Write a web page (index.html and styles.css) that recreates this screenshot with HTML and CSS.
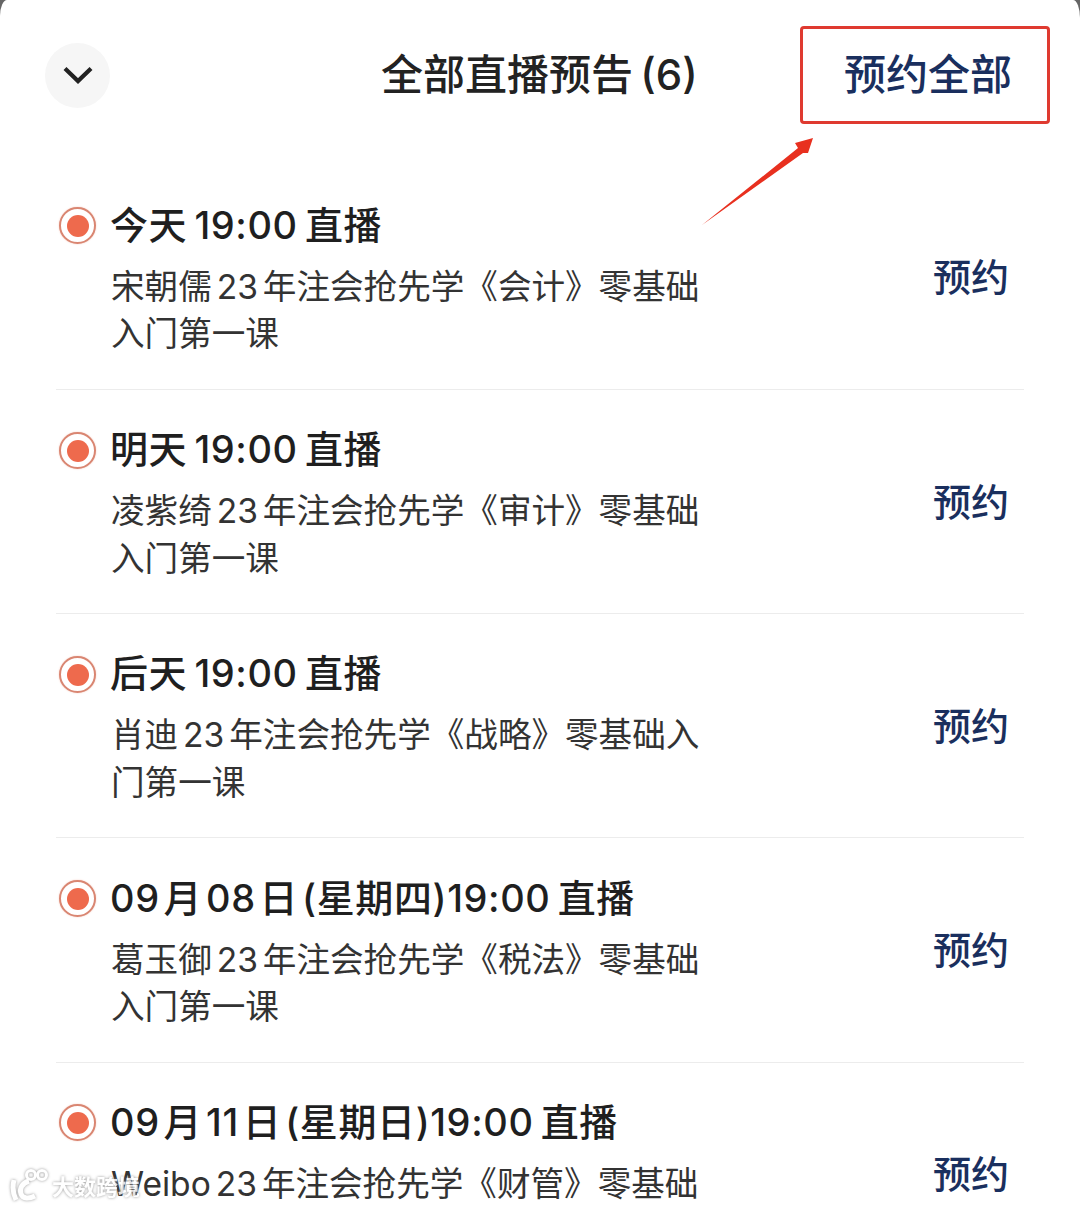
FILE: index.html
```html
<!DOCTYPE html>
<html lang="zh-CN">
<head>
  <meta charset="UTF-8">
  <title>全部直播预告</title>
  <link rel="stylesheet" href="styles.css">
</head>
<body>
  <div class="sheet">
    <div class="top">
      <div class="back">
        <svg width="30" height="20" viewBox="0 0 30 20"><path d="M2 3.5 L15 16 L28 3.5" fill="none" stroke="#222" stroke-width="4.2"/></svg>
      </div>
      <h2 class="top-title">全部直播预告 (6)</h2>
      <div class="top-action">预约全部</div>
    </div>

    <div class="item">
      <div class="item-main">
        <h4><i class="dot"></i>今天 19:00 直播</h4>
        <p>宋朝儒 23 年注会抢先学《会计》零基础入门第一课</p>
      </div>
      <div class="book">预约</div>
    </div>
    <div class="item">
      <div class="item-main">
        <h4><i class="dot"></i>明天 19:00 直播</h4>
        <p>凌紫绮 23 年注会抢先学《审计》零基础入门第一课</p>
      </div>
      <div class="book">预约</div>
    </div>
    <div class="item">
      <div class="item-main">
        <h4><i class="dot"></i>后天 19:00 直播</h4>
        <p>肖迪 23 年注会抢先学《战略》零基础入门第一课</p>
      </div>
      <div class="book">预约</div>
    </div>
    <div class="item">
      <div class="item-main">
        <h4><i class="dot"></i>09&#8202;月&#8202;08&#8202;日&#8202;(星期四)19:00 直播</h4>
        <p>葛玉御 23 年注会抢先学《税法》零基础入门第一课</p>
      </div>
      <div class="book">预约</div>
    </div>
    <div class="item">
      <div class="item-main">
        <h4><i class="dot"></i>09&#8202;月&#8202;11&#8202;日&#8202;(星期日)19:00 直播</h4>
        <p>Weibo 23 年注会抢先学《财管》零基础入门第一课</p>
      </div>
      <div class="book">预约</div>
    </div>
  </div>

  <!-- annotation over the screenshot -->
  <div class="red-box"></div>
  <svg class="arrow" width="120" height="96" viewBox="0 0 120 96"><path d="M0 88 L96 11 L93 6 L111 1 L106 16 L101 16 Z" fill="#e8301f"/></svg>

  <div class="mark">
    <svg width="40" height="34" viewBox="0 0 40 34" fill="none" stroke="#fff" stroke-width="5"><path d="M5 12 C3 20 4 26 7 32"/><path d="M20 13 C13 15 10 21 12 26 C14 31 20 31 26 28"/><circle cx="22" cy="7" r="4.5" stroke-width="3"/><circle cx="33" cy="7" r="4.5" stroke-width="3"/></svg>
    <span>大数跨境</span>
  </div>
</body>
</html>
```

FILE: styles.css
```css
body {
  background-color: #666;
  color: #1f1f1f;
  font-family: Inter, "Noto Sans CJK SC", sans-serif;
  margin: 0;
  height: 1208px;
  overflow: hidden;
  position: relative;
}

.sheet {
  background-color: white;
  border-radius: 7px 7px 0 0 / 16px 18px 0 0;
  height: 1208px;
  padding: 0 56px;
  box-sizing: border-box;
  overflow: hidden;
}

.top {
  display: flex;
  align-items: center;
  height: 150px;
  margin-bottom: 15.6px;
}

.back {
  width: 65px;
  height: 65px;
  margin-left: -11px;
  border-radius: 50%;
  background-color: #f6f6f6;
  display: flex;
  align-items: center;
  justify-content: center;
}

.top-title {
  flex: 1;
  margin: 0 0 0 271px;
  font-size: 42px;
  line-height: 50px;
  font-weight: 500;
  word-spacing: -4px;
  color: #222;
}

.top-action {
  font-size: 42px;
  line-height: 50px;
  font-weight: 500;
  color: #1a2f5e;
  margin-right: 12px;
}

.item {
  display: flex;
  align-items: center;
  justify-content: space-between;
  height: 224.3px;
  box-sizing: border-box;
  padding: 0 15px 0 0;
  border-bottom: 1px solid #ececec;
}

.item-main {
  width: 650px;
  padding-top: 4px;
}

.item h4 {
  display: flex;
  align-items: center;
  margin: 0 0 14px 0;
  font-size: 38px;
  line-height: 48px;
  font-weight: 500;
  letter-spacing: 0.6px;
  word-spacing: -3.5px;
  color: #1f1f1f;
  white-space: pre-wrap;
}

.dot {
  flex: none;
  width: 37px;
  height: 37px;
  margin: 2px 14px 0 3px;
  padding: 5.5px;
  border: 2.5px solid #d98672;
  border-radius: 50%;
  box-sizing: border-box;
  background-color: #ee6a4d;
  background-clip: content-box;
  box-shadow: 0 0 2px #f6cfc4;
}

.item p {
  margin: 0 0 0 55px;
  width: 595px;
  font-size: 33.6px;
  line-height: 47.5px;
  word-spacing: -4.5px;
  color: #333;
}

.book {
  font-size: 38px;
  line-height: 48px;
  font-weight: 500;
  color: #1a2f5e;
}

.red-box {
  position: absolute;
  left: 800px;
  top: 26px;
  width: 250px;
  height: 98px;
  box-sizing: border-box;
  border: 3px solid #df3a30;
  border-radius: 4px;
}

.arrow {
  position: absolute;
  left: 702px;
  top: 137px;
}

.mark {
  position: absolute;
  left: 9px;
  top: 1168px;
  display: flex;
  align-items: flex-end;
  gap: 3px;
  font-size: 22px;
  font-weight: 700;
  line-height: 30px;
  color: white;
  opacity: 0.85;
  filter: drop-shadow(0 0 1.5px #888);
}
```
